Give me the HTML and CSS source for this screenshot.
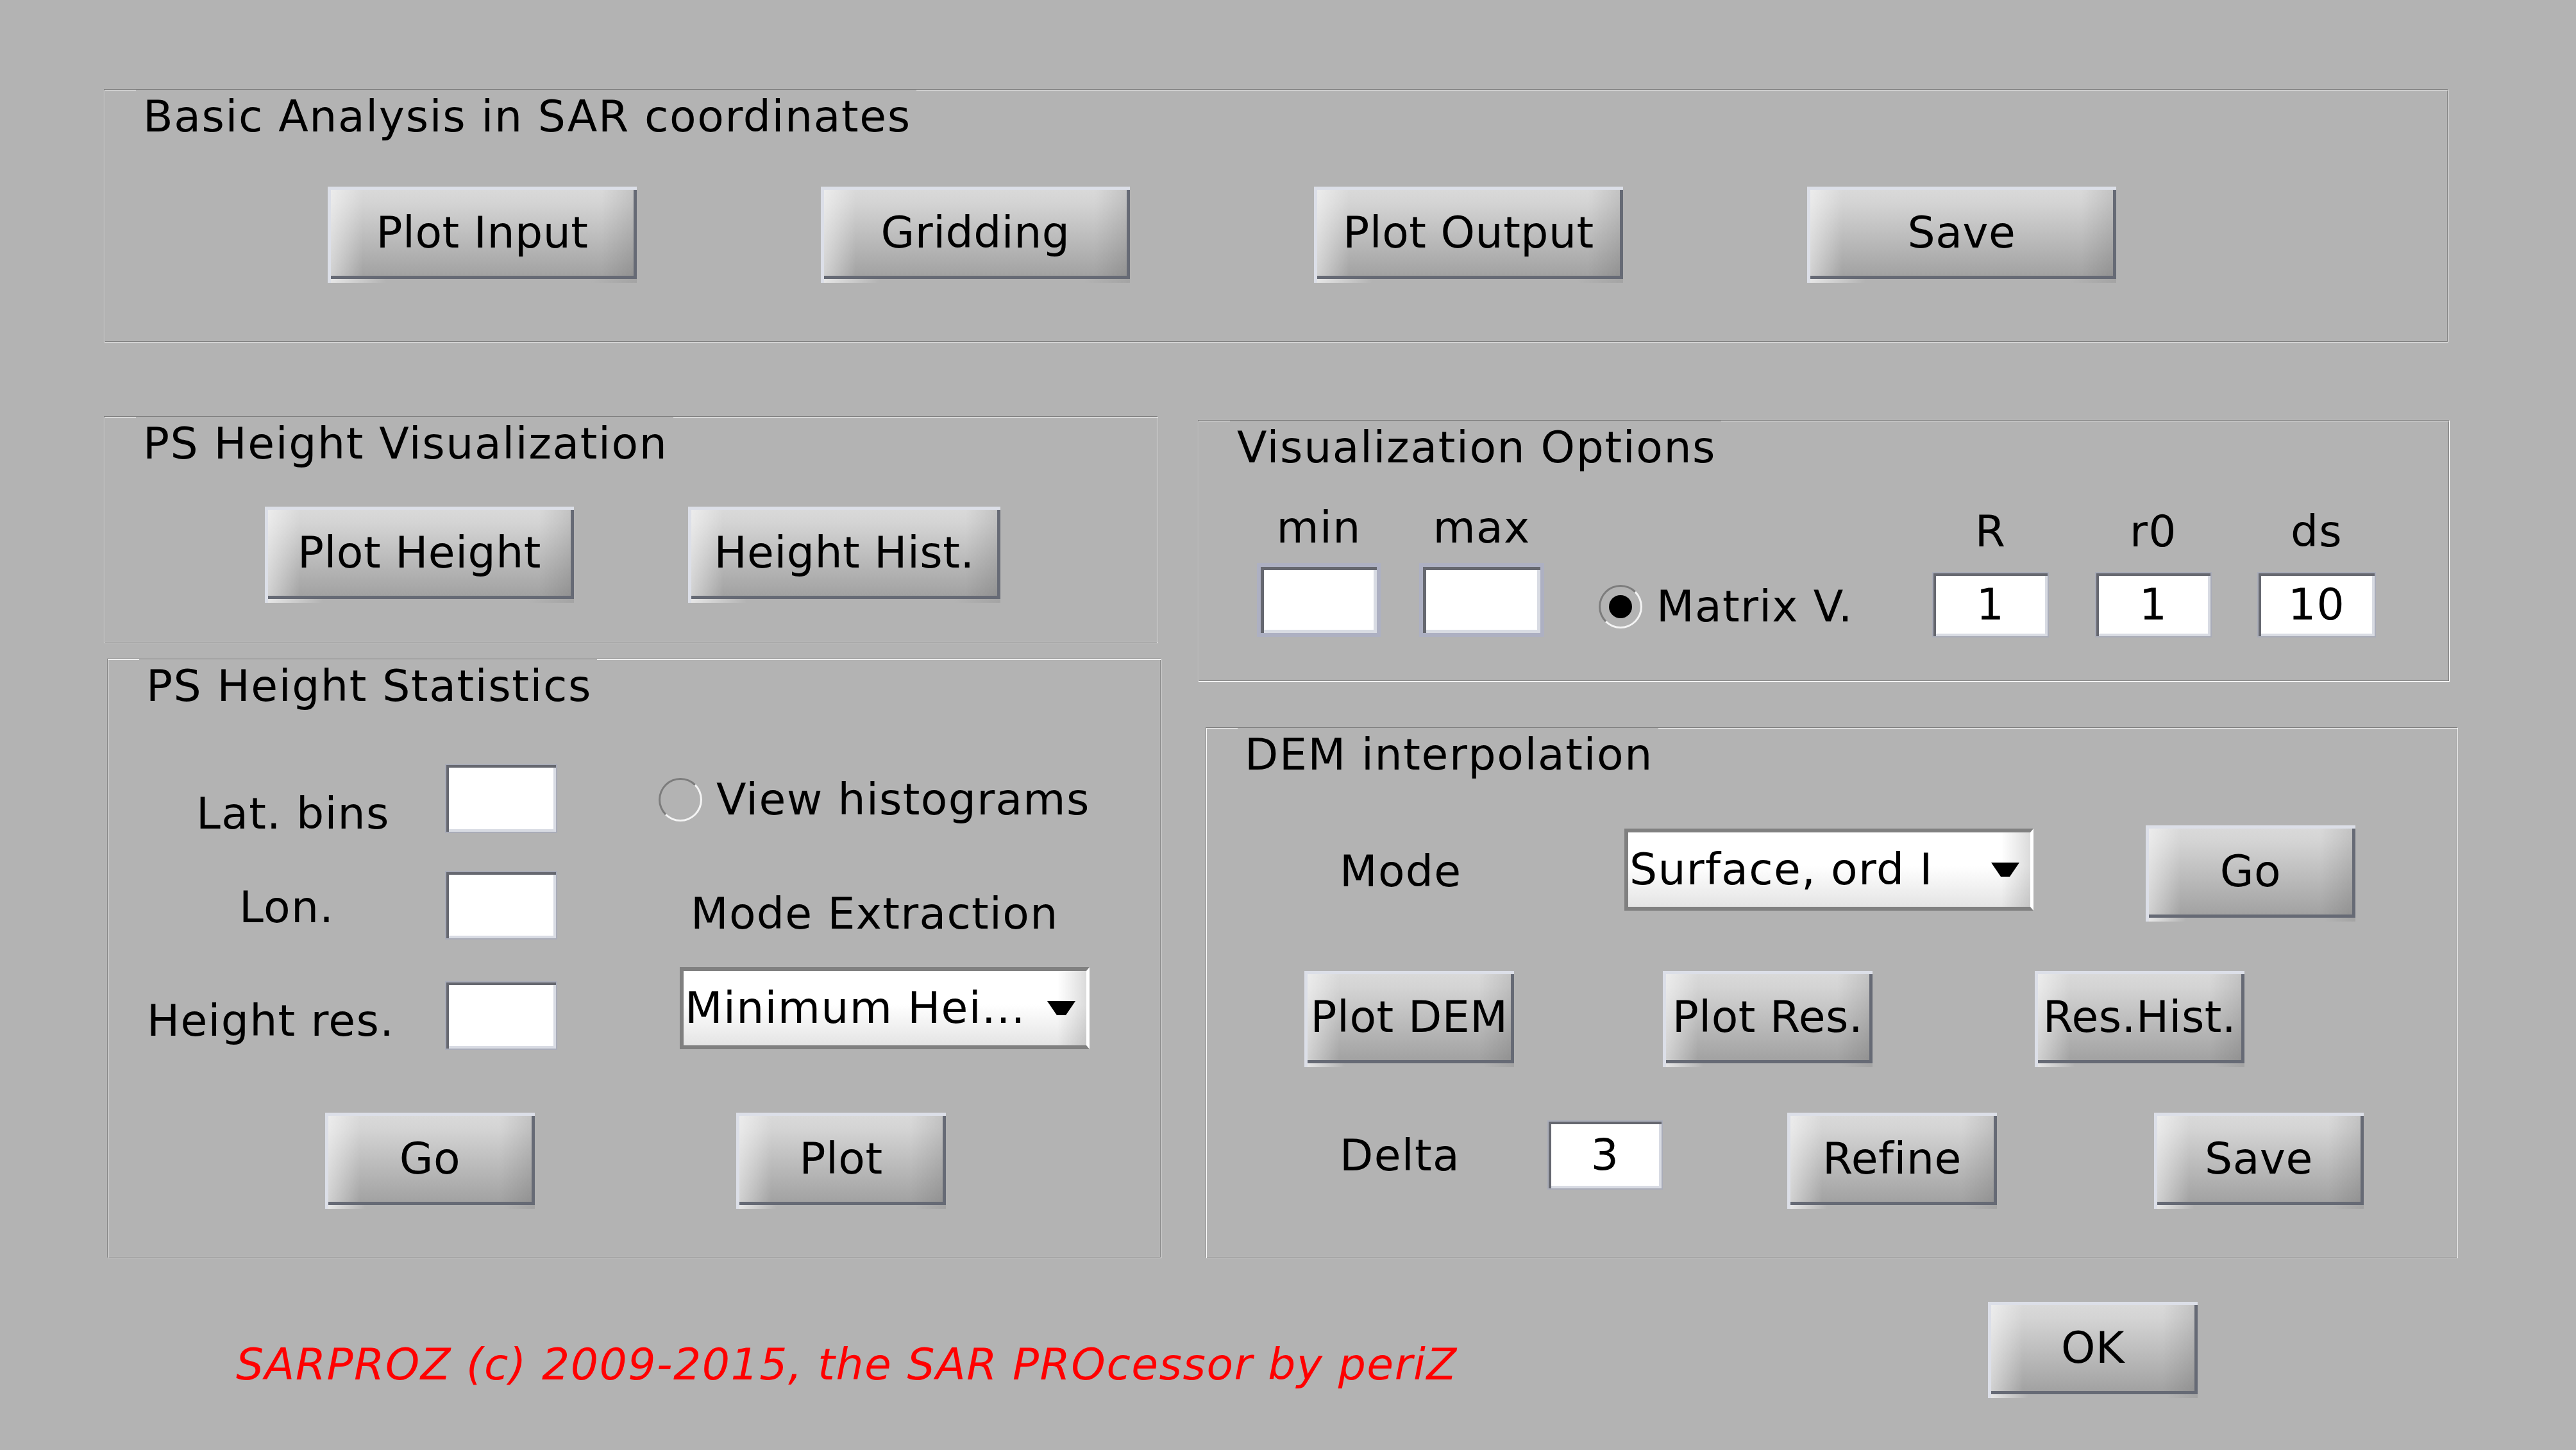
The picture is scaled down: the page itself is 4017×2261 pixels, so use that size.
FILE: index.html
```html
<!DOCTYPE html>
<html lang="en">
<head>
<meta charset="utf-8">
<title>SARPROZ - Height analysis</title>
<link rel="stylesheet" href="styles.css">
</head>
<body>
<div class="app">
  <section class="panel p-basic">
    <div class="ptitle">Basic Analysis in SAR coordinates</div>
    <div class="row basic-row">
      <div class="btn"><span class="face">Plot Input</span></div>
      <div class="btn"><span class="face">Gridding</span></div>
      <div class="btn"><span class="face">Plot Output</span></div>
      <div class="btn"><span class="face">Save</span></div>
    </div>
  </section>

  <div class="cols">
    <div class="col-left">
      <section class="panel p-vis">
        <div class="ptitle">PS Height Visualization</div>
        <div class="row vis-row">
          <div class="btn"><span class="face">Plot Height</span></div>
          <div class="btn wide"><span class="face">Height Hist.</span></div>
        </div>
      </section>

      <section class="panel p-stats">
        <div class="ptitle">PS Height Statistics</div>
        <div class="row st-a">
          <span class="lbl lbl-lat">Lat. bins</span>
          <span class="field plain f-stat"></span>
          <div class="radio r-hist"><span class="radio-circle"></span><span class="radio-text">View histograms</span></div>
        </div>
        <div class="row st-b">
          <span class="lbl lbl-lon">Lon.</span>
          <span class="field plain f-stat f-lon"></span>
          <span class="lbl lbl-mode">Mode Extraction</span>
        </div>
        <div class="row st-c">
          <span class="lbl lbl-hres">Height res.</span>
          <span class="field plain f-stat f-hres"></span>
          <div class="select sel-min"><span class="sel-text">Minimum Hei...</span><svg class="arrow" viewBox="0 0 44 22" width="44" height="22"><polygon points="0,0 44,0 29,22 15,22"/></svg></div>
        </div>
        <div class="row st-d">
          <div class="btn small b-go"><span class="face">Go</span></div>
          <div class="btn small b-plot"><span class="face">Plot</span></div>
        </div>
      </section>
    </div>

    <div class="col-right">
      <section class="panel p-opts">
        <div class="ptitle">Visualization Options</div>
        <div class="row opt-row">
          <div class="ocol c-min"><span class="olbl">min</span><span class="field f-mm"></span></div>
          <div class="ocol c-max"><span class="olbl">max</span><span class="field f-mm"></span></div>
          <div class="radio r-matrix"><span class="radio-circle on"></span><span class="radio-text">Matrix V.</span></div>
          <div class="ocol c-r"><span class="olbl">R</span><span class="field plain f-num">1</span></div>
          <div class="ocol c-r c-r0"><span class="olbl">r0</span><span class="field plain f-num">1</span></div>
          <div class="ocol c-r c-ds"><span class="olbl">ds</span><span class="field plain f-num">10</span></div>
        </div>
      </section>

      <section class="panel p-dem">
        <div class="ptitle">DEM interpolation</div>
        <div class="row dem-1">
          <span class="lbl lbl-dmode">Mode</span>
          <div class="select sel-surf"><span class="sel-text">Surface, ord I</span><svg class="arrow" viewBox="0 0 44 22" width="44" height="22"><polygon points="0,0 44,0 29,22 15,22"/></svg></div>
          <div class="btn small b-dgo"><span class="face">Go</span></div>
        </div>
        <div class="row dem-2">
          <div class="btn small b-pdem"><span class="face">Plot DEM</span></div>
          <div class="btn small b-pres"><span class="face">Plot Res.</span></div>
          <div class="btn small b-rhist"><span class="face">Res.Hist.</span></div>
        </div>
        <div class="row dem-3">
          <span class="lbl lbl-delta">Delta</span>
          <span class="field plain f-delta">3</span>
          <div class="btn small b-refine"><span class="face">Refine</span></div>
          <div class="btn small b-dsave"><span class="face">Save</span></div>
        </div>
      </section>
    </div>
  </div>

  <footer class="footer">
    <span class="credit">SARPROZ (c) 2009-2015, the SAR PROcessor by periZ</span>
    <div class="btn small b-ok"><span class="face">OK</span></div>
  </footer>
</div>
</body>
</html>
```
FILE: styles.css
```css
html, body {
  margin: 0;
  padding: 0;
}
body {
  width: 4017px;
  height: 2261px;
  overflow: hidden;
  background: #b3b3b3;
  color: #000;
  font-family: "DejaVu Sans", "Liberation Sans", sans-serif;
  font-size: 68px;
  line-height: 80px;
  letter-spacing: 1.3px;
}
.app {
  padding: 139px 0 0 162px;
}

/* ---------- panels ---------- */
.panel {
  box-sizing: border-box;
  display: flex;
  flex-direction: column;
  align-items: flex-start;
  border: 1px solid;
  border-color: #808080 #ffffff #ffffff #808080;
  box-shadow: inset 1px 1px 0 #ffffff, inset -1px -1px 0 #808080;
}
.ptitle {
  margin-left: 49px;
  padding: 2px 8px 0 11px;
  line-height: 80px;
  background: #b3b3b3;
  white-space: nowrap;
  letter-spacing: 1.6px;
}
.row {
  display: flex;
  align-items: flex-start;
  align-self: stretch;
}
.p-basic { width: 3656px; height: 395px; }
.basic-row { margin-top: 69px; padding-left: 348px; gap: 287px; height: 150px; }

.cols { display: flex; align-items: flex-start; }
.col-left { margin-top: 115px; }
.col-right { margin-left: 57px; margin-top: 121px; }

.p-vis { width: 1644px; height: 354px; }
.vis-row { margin-top: 58px; padding-left: 250px; gap: 178px; height: 150px; }

.p-stats { width: 1644px; height: 935px; margin-top: 24px; margin-left: 5px; }
.st-a { margin-top: 81px; height: 108px; }
.st-b { margin-top: 59px; height: 107px; }
.st-c { margin-top: 43px; height: 128px; }
.st-d { margin-top: 99px; height: 150px; }

.lbl { white-space: nowrap; line-height: 80px; flex: none; }
.lbl-lat { margin-left: 138px; width: 388px; margin-top: 38px; }
.lbl-lon { margin-left: 205px; width: 321px; margin-top: 17px; }
.lbl-hres { margin-left: 61px; width: 465px; margin-top: 44px; }
.lbl-mode { margin-left: 208px; margin-top: 27px; }

.f-stat { width: 175px; height: 108px; }
.f-lon, .f-hres { height: 107px; }
.f-hres { margin-top: 22px; }

.r-hist { margin-left: 158px; margin-top: 16px; }
.sel-min { margin-left: 191px; width: 639px; height: 128px; }
.b-go { margin-left: 339px; }
.b-plot { margin-left: 314px; }

.p-opts { width: 1952px; height: 408px; }
.opt-row { margin-top: 45px; height: 220px; }
.ocol { display: flex; flex-direction: column; align-items: center; flex: none; }
.olbl { line-height: 80px; white-space: nowrap; }
.c-min { margin-left: 91px; width: 193px; }
.c-max { margin-left: 60px; width: 195px; }
.f-mm { width: 100%; height: 115px; margin-top: 15px; }
.r-matrix { margin-left: 85px; margin-top: 123px; width: 520px; }
.c-r { width: 182px; margin-top: 6px; }
.c-r .field { width: 100%; height: 102px; margin-top: 23px; }
.c-r0 { margin-left: 72px; }
.c-ds { margin-left: 71px; width: 185px; }

.p-dem { width: 1953px; height: 828px; margin-top: 71px; margin-left: 12px; }
.dem-1 { margin-top: 68px; height: 150px; }
.dem-2 { margin-top: 79px; height: 150px; }
.dem-3 { margin-top: 71px; height: 150px; }
.lbl-dmode { margin-left: 208px; width: 444px; margin-top: 34px; }
.sel-surf { width: 638px; height: 128px; margin-top: 7px; }
.b-dgo { margin-left: 175px; margin-top: 2px; }
.b-pdem { margin-left: 153px; }
.b-pres { margin-left: 232px; }
.b-rhist { margin-left: 253px; }
.lbl-delta { margin-left: 208px; width: 324px; margin-top: 27px; }
.f-delta { width: 180px; height: 108px; margin-top: 12px; }
.b-refine { margin-left: 194px; }
.b-dsave { margin-left: 245px; }

/* ---------- footer ---------- */
.footer {
  display: flex;
  align-items: flex-start;
  margin-top: 68px;
  height: 150px;
}
.credit {
  margin-left: 206px;
  width: 2732px;
  flex: none;
  margin-top: 58px;
  color: #ff0000;
  font-style: italic;
  white-space: nowrap;
  letter-spacing: 1.5px;
}

/* ---------- buttons ---------- */
.btn {
  box-sizing: border-box;
  flex: none;
  width: 482px;
  height: 150px;
  border-top: 5px solid #dcdfe8;
  border-left: 5px solid #dcdfe8;
  padding-bottom: 6px;
  background: linear-gradient(to right, #e6e6e6, #b3b3b3 18%, #b3b3b3 85%, #a4a4a4);
  letter-spacing: 0.5px;
}
.btn.wide { width: 487px; }
.btn.small { width: 327px; }
.face {
  box-sizing: border-box;
  display: flex;
  align-items: center;
  justify-content: center;
  height: 100%;
  white-space: nowrap;
  border-right: 5px solid #666a75;
  border-bottom: 5px solid #666a75;
  background:
    linear-gradient(to right, rgba(255,255,255,0.5), rgba(255,255,255,0) 50px, rgba(0,0,0,0) calc(100% - 50px), rgba(0,0,0,0.1)),
    linear-gradient(#d9d9d9, #d4d4d4 15%, #a2a2a2);
}

/* ---------- text fields ---------- */
.field {
  box-sizing: border-box;
  display: flex;
  align-items: center;
  justify-content: center;
  flex: none;
  border: 6px solid #adb0c2;
  background: #ffffff;
  box-shadow: inset 5px 5px 0 #666870, inset -5px -5px 0 #d8dbe3;
  line-height: 80px;
}
.field.plain {
  border-width: 2px;
  border-color: #a9acb8;
  box-shadow: inset 4px 4px 0 #666870, inset -4px -4px 0 #d8dbe3;
}

/* ---------- radio ---------- */
.radio {
  display: flex;
  align-items: center;
  flex: none;
  height: 80px;
}
.radio-circle {
  box-sizing: border-box;
  width: 68px;
  height: 68px;
  border-radius: 50%;
  border: 3px solid;
  border-color: #7c7c7c #f4f4f4 #f4f4f4 #7c7c7c;
  display: flex;
  align-items: center;
  justify-content: center;
  flex: none;
}
.radio-circle.on::after {
  content: "";
  width: 36px;
  height: 36px;
  border-radius: 50%;
  background: #000;
}
.radio-text { margin-left: 22px; white-space: nowrap; }

/* ---------- dropdown ---------- */
.select {
  box-sizing: border-box;
  display: flex;
  align-items: center;
  flex: none;
  border: 6px solid #808080;
  border-right: 5px solid #ffffff;
  background:
    linear-gradient(to right, rgba(0,0,0,0) calc(100% - 45px), rgba(0,0,0,0.14)),
    linear-gradient(#ffffff, #ffffff 45%, #e4e4e4);
  padding-left: 2px;
}
.sel-text { white-space: nowrap; line-height: 80px; }
.arrow { margin-left: auto; margin-right: 17px; flex: none; display: block; }
.arrow polygon { fill: #000; }
```
